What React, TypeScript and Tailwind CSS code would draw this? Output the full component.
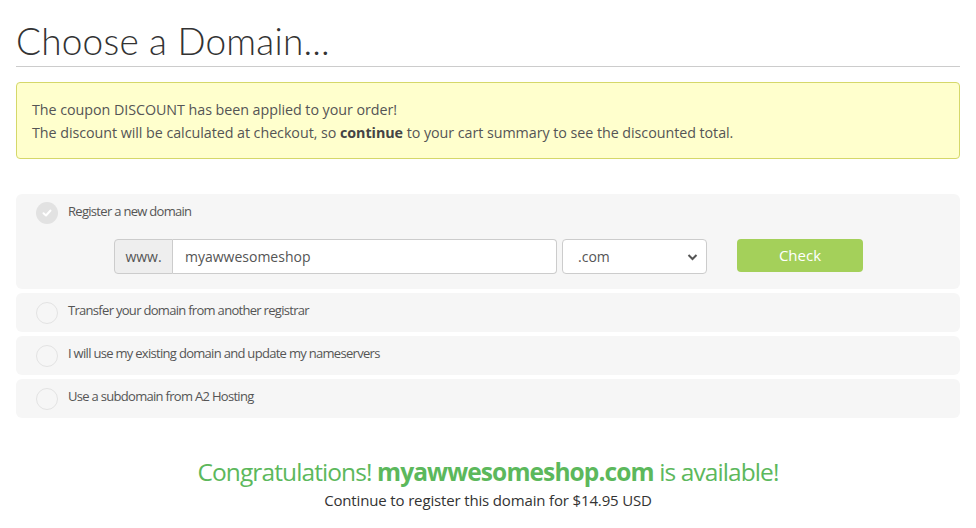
import React from "react";

function Radio({ checked }: { checked?: boolean }) {
  if (checked) {
    return (
      <span className="flex h-[22px] w-[22px] shrink-0 items-center justify-center rounded-full bg-[#e2e2e2]">
        <svg width="12" height="12" viewBox="0 0 12 12" fill="none">
          <path d="M2.5 6.2 L5 8.5 L9.5 3.5" stroke="#fff" strokeWidth="2" strokeLinecap="round" strokeLinejoin="round" />
        </svg>
      </span>
    );
  }
  return <span className="h-[22px] w-[22px] shrink-0 rounded-full border border-[#e3e3e3] bg-[#f6f6f6]" />;
}

const labelFont = { fontFamily: '"Open Sans", sans-serif' };

function Option({ label }: { label: string }) {
  return (
    <div className="flex h-[39px] items-center gap-[10px] rounded-[6px] bg-[#f6f6f6] pl-[20px]">
      <Radio />
      <span className="-mt-[3px] text-[13px] tracking-[-0.7px] text-[#555]" style={labelFont}>
        {label}
      </span>
    </div>
  );
}

export default function App() {
  return (
    <div className="min-h-[528px] w-[976px] bg-white px-[16px] text-[#333]" style={{ fontFamily: '"Open Sans", sans-serif' }}>
      <h1 className="pt-[19px] text-[37px] font-light leading-[44px] tracking-[0.2px] text-[#333]" style={{ fontFamily: 'Lato, sans-serif' }}>
        Choose a Domain...
      </h1>
      <div className="mt-[3px] h-px bg-[#cccccc]" />
      <div className="mt-[15px] rounded-[4px] border border-[#d5d86a] bg-[#ffffcd] px-[15px] pb-[14px] pt-[15px] text-[14.3px] leading-[23px] tracking-[-0.05px] text-[#555]">
        <p>The coupon DISCOUNT has been applied to your order!</p>
        <p>
          The discount will be calculated at checkout, so <b className="font-bold text-[#444]">continue</b> to your cart summary to see the discounted total.
        </p>
      </div>

      <div className="mt-[35px] flex flex-col gap-[4px]">
        <div className="h-[95px] rounded-[6px] bg-[#f6f6f6] pl-[20px] pt-[8px]">
          <div className="flex items-center gap-[10px]">
            <Radio checked />
            <span className="-mt-[3px] text-[13px] tracking-[-0.7px] text-[#555]" style={labelFont}>
              Register a new domain
            </span>
          </div>
          <div className="ml-[78px] mt-[15px] flex items-start">
            <div className="flex h-[35px] w-[59px] items-center justify-center rounded-l-[4px] border border-[#ccc] bg-[#eeeeee] text-[14px] text-[#555]">
              www.
            </div>
            <div className="flex h-[35px] w-[384px] items-center rounded-r-[4px] border border-l-0 border-[#ccc] bg-white px-[12px] text-[14px] text-[#555]">
              myawwesomeshop
            </div>
            <div className="ml-[5px] flex h-[35px] w-[145px] items-center justify-between rounded-[4px] border border-[#ccc] bg-white pl-[15px] pr-[8px] text-[14px] text-[#555]">
              <span>.com</span>
              <svg width="11" height="8" viewBox="0 0 11 8">
                <path d="M1.5 2 L5.5 6 L9.5 2" stroke="#555" strokeWidth="2" fill="none" />
              </svg>
            </div>
            <div className="ml-[30px] flex h-[33px] w-[126px] items-center justify-center rounded-[4px] bg-[#a4d05a] text-[15px] text-white">
              Check
            </div>
          </div>
        </div>
        <Option label="Transfer your domain from another registrar" />
        <Option label="I will use my existing domain and update my nameservers" />
        <Option label="Use a subdomain from A2 Hosting" />
      </div>

      <div className="mt-[39px] text-center">
        <p className="text-[24.5px] leading-[30px] tracking-[-0.9px] text-[#5cb85c]">
          Congratulations! <b className="font-bold">myawwesomeshop.com</b> is available!
        </p>
        <p className="mt-[2px] text-[15px] tracking-[-0.15px] text-[#333]">Continue to register this domain for $14.95 USD</p>
      </div>
    </div>
  );
}
